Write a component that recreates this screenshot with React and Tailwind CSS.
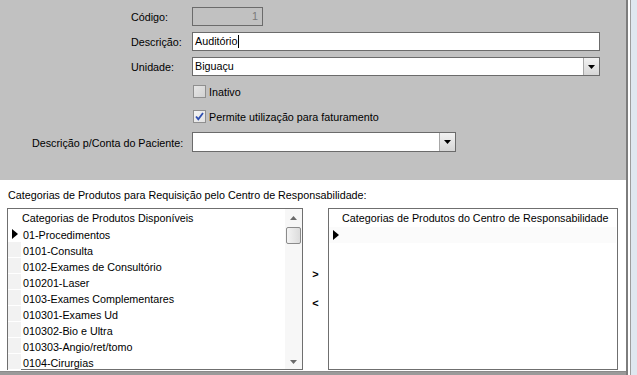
import React from "react";

const font = { fontFamily: '"Liberation Sans", Arial, sans-serif' };

const disponiveis = [
  "01-Procedimentos",
  "0101-Consulta",
  "0102-Exames de Consultório",
  "010201-Laser",
  "0103-Exames Complementares",
  "010301-Exames Ud",
  "010302-Bio e Ultra",
  "010303-Angio/ret/tomo",
  "0104-Cirurgias",
];

const Arrow = () => (
  <svg width="6" height="10" viewBox="0 0 6 10">
    <path d="M0 0 L6 5 L0 10 Z" fill="#000" />
  </svg>
);

const DropButton = () => (
  <div className="w-[16px] h-full flex items-center justify-center border-l border-[#a7a7a7] bg-gradient-to-b from-[#f2f2f2] to-[#d6d6d6]">
    <svg width="7" height="4" viewBox="0 0 7 4">
      <path d="M0 0 H7 L3.5 4 Z" fill="#000" />
    </svg>
  </div>
);

const Checkbox = ({ checked, label }) => (
  <div className="flex items-center gap-[3px] pl-[193px]">
    <div
      className={
        "w-[13px] h-[13px] border border-[#8f8f8f] flex items-center justify-center " +
        (checked ? "bg-gradient-to-br from-[#f4f4f4] to-[#e2e2e2]" : "bg-gradient-to-br from-[#e6e6e6] to-[#d2d2d2]")
      }
    >
      {checked && (
        <svg width="9" height="9" viewBox="0 0 9 9">
          <path d="M1 4.5 L3.3 7.2 L8 1" stroke="#2f4fb0" strokeWidth="1.8" fill="none" />
        </svg>
      )}
    </div>
    <span className="pt-[2px]">{label}</span>
  </div>
);

export default function App() {
  return (
    <div style={font} className="w-[637px] h-[375px] bg-[#dfe7ef] flex overflow-hidden">
      <div className="w-[628px] flex flex-col border-r-2 border-[#7d7d7d]">
        {/* top form */}
        <div className="h-[180px] bg-[#c1c1c1] flex flex-col pt-[7px] gap-[6px] text-[10.75px] text-black">
          <div className="h-[19px] flex items-center pl-[131px]">
            <span className="w-[61px] pt-[2px]">Código:</span>
            <div className="w-[71px] h-full border border-[#6b6b6b] flex items-center justify-end pr-[4px] text-[#7a7a7a]">1</div>
          </div>
          <div className="h-[19px] flex items-center pl-[131px]">
            <span className="w-[61px] pt-[2px]">Descrição:</span>
            <div className="w-[408px] h-full border border-[#6b6b6b] bg-white flex items-center pl-[2px]">
              Auditório<span className="w-px h-[13px] bg-black ml-px" />
            </div>
          </div>
          <div className="h-[19px] flex items-center pl-[131px]">
            <span className="w-[61px] pt-[2px]">Unidade:</span>
            <div className="w-[408px] h-full border border-[#6b6b6b] bg-white flex items-center justify-between">
              <span className="pl-[2px]">Biguaçu</span>
              <DropButton />
            </div>
          </div>
          <div className="h-[19px] flex items-center">
            <Checkbox label="Inativo" />
          </div>
          <div className="h-[19px] flex items-center">
            <Checkbox checked label="Permite utilização para faturamento" />
          </div>
          <div className="h-[20px] flex items-center pl-[32px]">
            <span className="w-[160px] pt-[2px]">Descrição p/Conta do Paciente:</span>
            <div className="w-[264px] h-full border border-[#6b6b6b] bg-white flex justify-end">
              <DropButton />
            </div>
          </div>
        </div>

        {/* bottom lists */}
        <div className="h-[191px] bg-white flex flex-col text-[10.75px] text-black">
          <div className="h-[28px] flex items-center pl-[8px] pt-[2px]">
            Categorias de Produtos para Requisição pelo Centro de Responsabilidade:
          </div>
          <div className="flex items-start pl-[7px]">
            <div className="w-[296px] h-[162px] border border-[#6f6f6f] flex">
              <div className="flex-1 flex flex-col">
                <div className="h-[18px] flex items-center pl-[14px] pt-[1px]">Categorias de Produtos Disponíveis</div>
                {disponiveis.map((item, i) => (
                  <div key={i} className="h-[16px] flex items-center">
                    <div className={"w-[13px] h-full flex items-center justify-center " + (i === 0 ? "bg-white" : "bg-[#f2f2f2] border-b border-white")}>
                      {i === 0 && <Arrow />}
                    </div>
                    <span className="pl-[2px] pt-[1px]">{item}</span>
                  </div>
                ))}
              </div>
              <div className="w-[17px] bg-[#f7f7f7] flex flex-col items-center">
                <div className="h-[18px] flex items-center">
                  <svg width="7" height="4" viewBox="0 0 7 4">
                    <path d="M0 4 H7 L3.5 0 Z" fill="#6a6a6a" />
                  </svg>
                </div>
                <div className="w-[15px] h-[17px] border border-[#8b8b8b] rounded-[2px] bg-gradient-to-r from-[#f4f4f4] to-[#dcdcdc]" />
                <div className="flex-1" />
                <div className="h-[14px] flex items-center">
                  <svg width="7" height="4" viewBox="0 0 7 4">
                    <path d="M0 0 H7 L3.5 4 Z" fill="#6a6a6a" />
                  </svg>
                </div>
              </div>
            </div>
            <div className="w-[25px] h-[162px] flex flex-col items-center pt-[61px] gap-[18px] font-bold text-[11px] leading-none">
              <span>&gt;</span>
              <span>&lt;</span>
            </div>
            <div className="w-[290px] h-[162px] border border-[#6f6f6f] flex flex-col">
              <div className="h-[18px] flex items-center pl-[13px] pt-[1px]">Categorias de Produtos do Centro de Responsabilidade</div>
              <div className="h-[16px] flex items-center bg-[#fbfbfb] mr-[1px]">
                <div className="w-[13px] flex items-center justify-center">
                  <Arrow />
                </div>
              </div>
            </div>
          </div>
        </div>
        <div className="h-[1px] bg-[#8a8a8a]" />
        <div className="h-[3px] bg-[#9a9a9a]" />
      </div>
      <div className="w-[2px] h-full bg-white" />
      <div className="w-[1px] h-full bg-[#9d9d9d]" />
    </div>
  );
}
